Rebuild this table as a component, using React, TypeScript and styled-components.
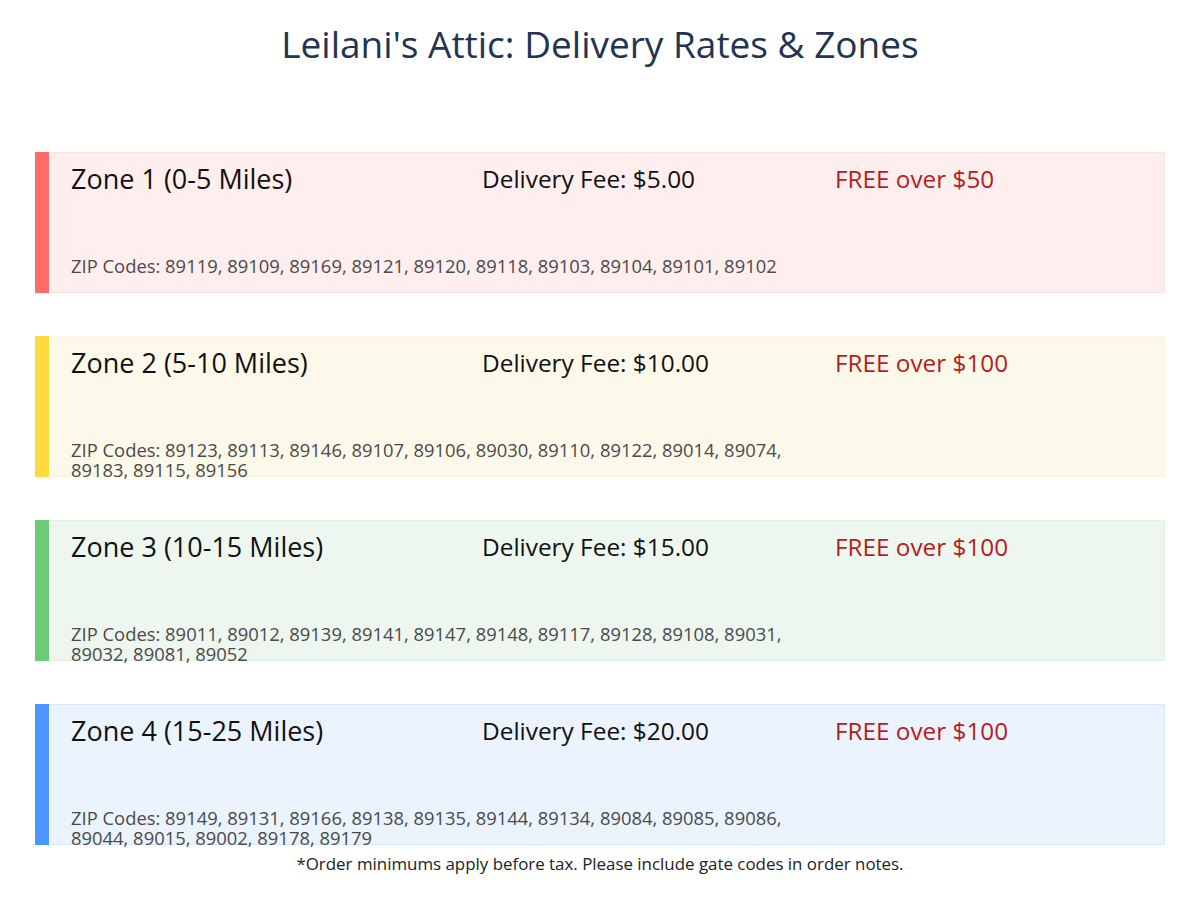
import React from "react";
import styled, { createGlobalStyle } from "styled-components";

const GlobalStyle = createGlobalStyle`
  body {
    margin: 0;
    background: #ffffff;
    font-family: "Open Sans", "Noto Sans", sans-serif;
  }
`;

type Zone = {
  name: string;
  fee: string;
  free: string;
  zips: string;
  accent: string;
  bg: string;
  border: string;
};

const zones: Zone[] = [
  {
    name: "Zone 1 (0-5 Miles)",
    fee: "Delivery Fee: $5.00",
    free: "FREE over $50",
    zips: "ZIP Codes: 89119, 89109, 89169, 89121, 89120, 89118, 89103, 89104, 89101, 89102",
    accent: "#ff6b6b",
    bg: "#ffeeee",
    border: "#fde0e0",
  },
  {
    name: "Zone 2 (5-10 Miles)",
    fee: "Delivery Fee: $10.00",
    free: "FREE over $100",
    zips: "ZIP Codes: 89123, 89113, 89146, 89107, 89106, 89030, 89110, 89122, 89014, 89074, 89183, 89115, 89156",
    accent: "#ffd93d",
    bg: "#fdf9ea",
    border: "#fbf4dc",
  },
  {
    name: "Zone 3 (10-15 Miles)",
    fee: "Delivery Fee: $15.00",
    free: "FREE over $100",
    zips: "ZIP Codes: 89011, 89012, 89139, 89141, 89147, 89148, 89117, 89128, 89108, 89031, 89032, 89081, 89052",
    accent: "#6bcb77",
    bg: "#eef7ef",
    border: "#e0f1e2",
  },
  {
    name: "Zone 4 (15-25 Miles)",
    fee: "Delivery Fee: $20.00",
    free: "FREE over $100",
    zips: "ZIP Codes: 89149, 89131, 89166, 89138, 89135, 89144, 89134, 89084, 89085, 89086, 89044, 89015, 89002, 89178, 89179",
    accent: "#4d96ff",
    bg: "#eaf3fe",
    border: "#d8e8fc",
  },
];

const Page = styled.div`
  width: 1200px;
  height: 901px;
  overflow: hidden;
`;

const Title = styled.h1`
  margin: 0;
  padding-top: 21px;
  height: 152px;
  box-sizing: border-box;
  text-align: center;
  font-weight: 400;
  font-size: 37px;
  line-height: 46px;
  color: #1f3551;
`;

const ZoneList = styled.div`
  display: flex;
  flex-direction: column;
  gap: 43px;
  padding: 0 35px;
`;

const Card = styled.div`
  display: flex;
  height: 141px;
`;

const Stripe = styled.div<{ $color: string }>`
  width: 14px;
  flex-shrink: 0;
  background: ${(p) => p.$color};
`;

const Body = styled.div<{ $bg: string; $border: string }>`
  flex: 1;
  background: ${(p) => p.$bg};
  border: 1px solid ${(p) => p.$border};
  border-left: none;
  padding: 7px 22px 0 22px;
  box-sizing: border-box;
`;

const HeaderRow = styled.div`
  display: grid;
  grid-template-columns: 411px 353px 1fr;
  align-items: center;
  height: 34px;
`;

const ZoneName = styled.div`
  font-size: 27px;
  color: #111;
  white-space: nowrap;
`;

const Fee = styled.div`
  font-size: 24.4px;
  color: #111;
  white-space: nowrap;
`;

const Free = styled.div`
  font-size: 24.3px;
  color: #b71c1c;
  white-space: nowrap;
`;

const Zips = styled.div`
  margin-top: 62px;
  max-width: 730px;
  font-size: 18.4px;
  line-height: 20px;
  color: #4a4a4a;
`;

const Footnote = styled.p`
  margin: 9px 0 0;
  text-align: center;
  font-size: 16.9px;
  line-height: 20px;
  color: #222;
`;

function ZoneCard({ zone }: { zone: Zone }) {
  return (
    <Card>
      <Stripe $color={zone.accent} />
      <Body $bg={zone.bg} $border={zone.border}>
        <HeaderRow>
          <ZoneName>{zone.name}</ZoneName>
          <Fee>{zone.fee}</Fee>
          <Free>{zone.free}</Free>
        </HeaderRow>
        <Zips>{zone.zips}</Zips>
      </Body>
    </Card>
  );
}

export default function App() {
  return (
    <Page>
      <GlobalStyle />
      <Title>Leilani's Attic: Delivery Rates &amp; Zones</Title>
      <ZoneList>
        {zones.map((z) => (
          <ZoneCard key={z.name} zone={z} />
        ))}
      </ZoneList>
      <Footnote>
        *Order minimums apply before tax. Please include gate codes in order notes.
      </Footnote>
    </Page>
  );
}
